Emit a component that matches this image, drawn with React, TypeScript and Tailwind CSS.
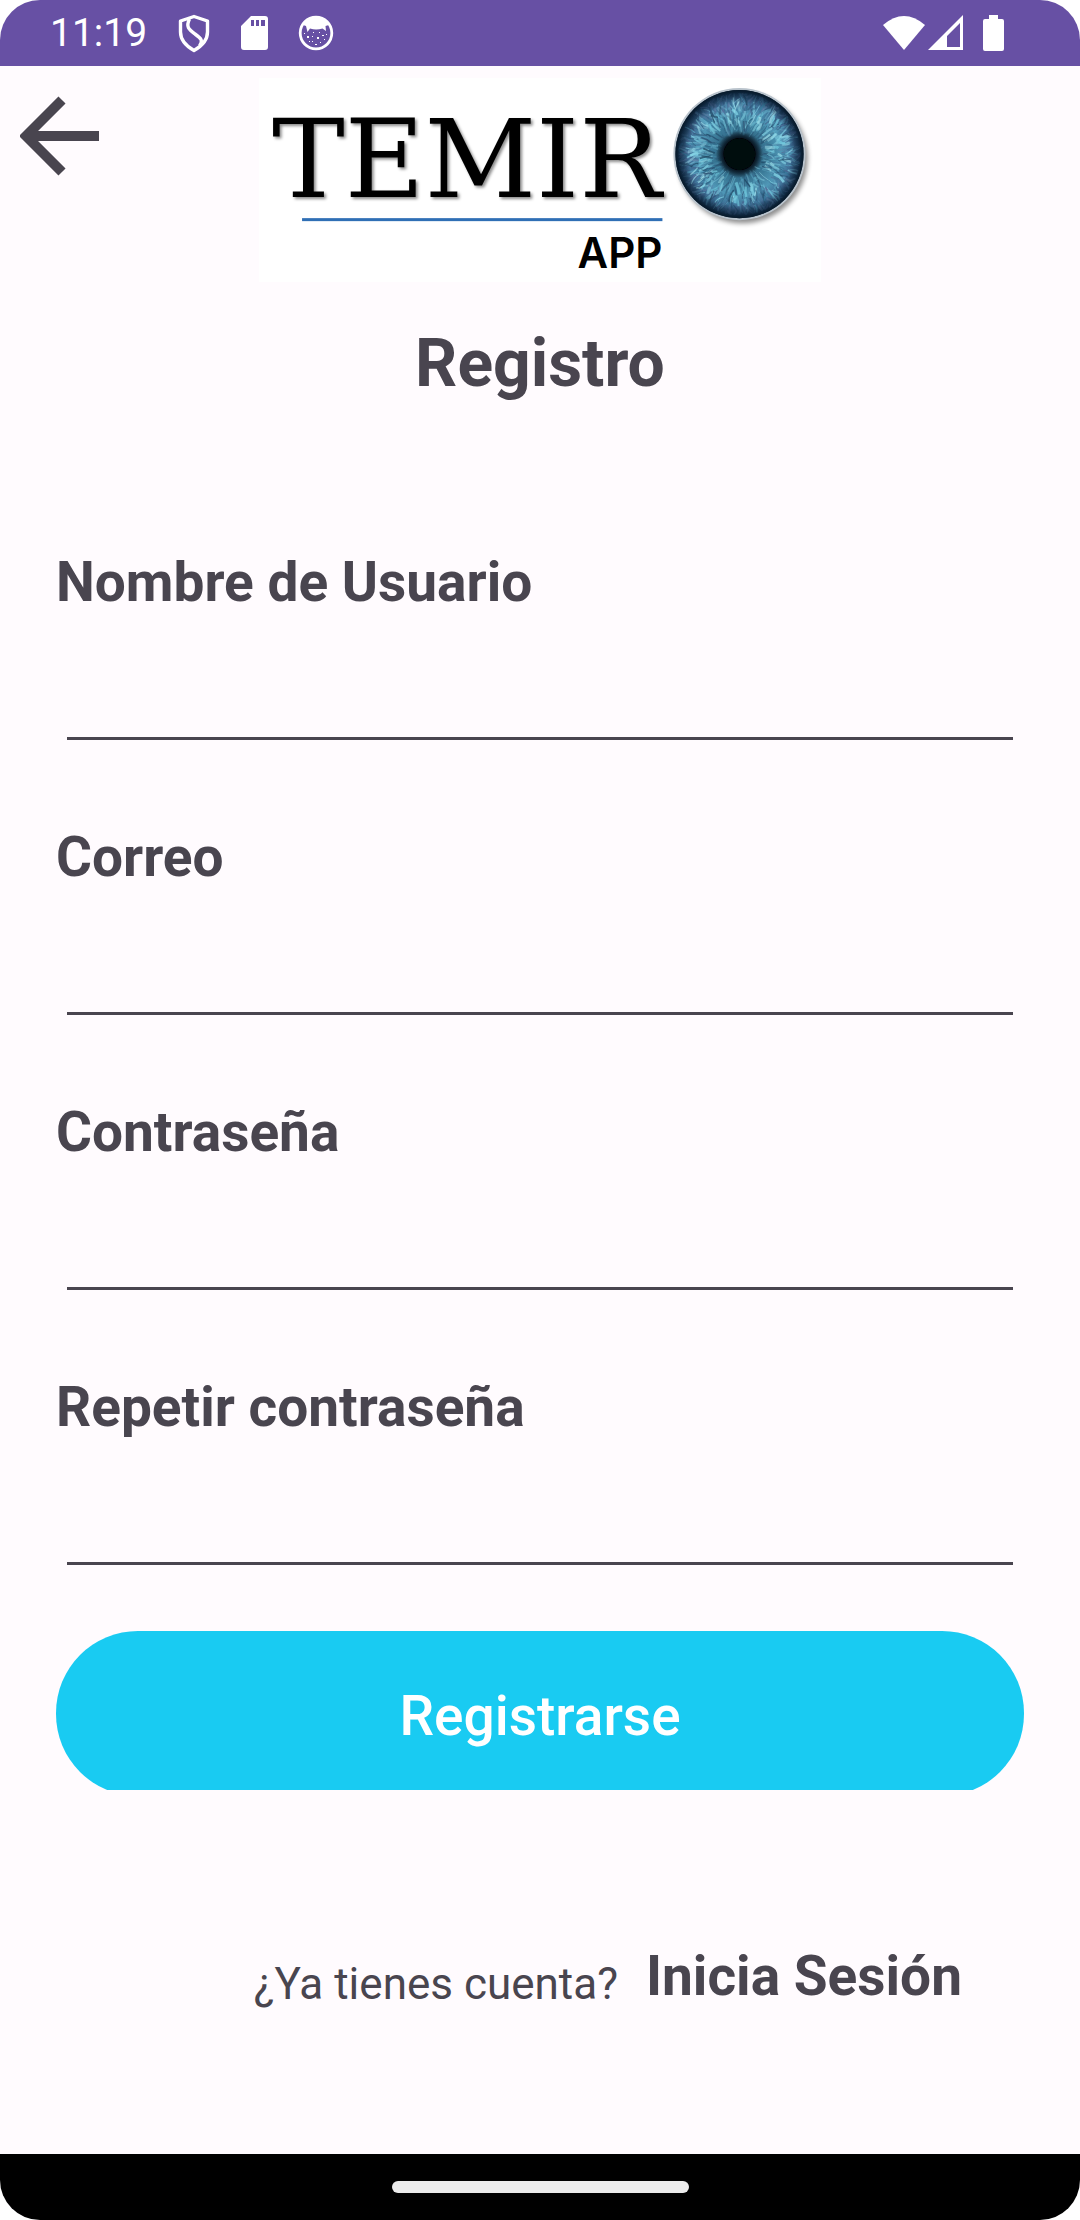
const FIELDS = [
  { id: 'usuario', label: 'Nombre de Usuario', type: 'text' },
  { id: 'correo', label: 'Correo', type: 'email' },
  { id: 'clave', label: 'Contraseña', type: 'password' },
  { id: 'clave2', label: 'Repetir contraseña', type: 'password' },
];

// Deterministic pseudo-random numbers for the iris fibres.
function makeRandom(seed: number) {
  let s = seed;
  return () => {
    s = (s * 16807) % 2147483647;
    return s / 2147483647;
  };
}

function makeFibres(seed: number, count: number, tones: string[], from: number, spread: number, length: number, width: number) {
  const rnd = makeRandom(seed);
  return Array.from({ length: count }, () => {
    const a = rnd() * Math.PI * 2;
    const r1 = from + rnd() * spread;
    const r2 = Math.min(61, r1 + 4 + rnd() * length);
    const b = a + (rnd() - 0.5) * 0.24;
    const m = (a + b) / 2 + (rnd() - 0.5) * 0.12;
    const rm = (r1 + r2) / 2;
    const p = (r: number, t: number) => `${(r * Math.cos(t)).toFixed(1)} ${(r * Math.sin(t)).toFixed(1)}`;
    return {
      d: `M${p(r1, a)}Q${p(rm, m)} ${p(r2, b)}`,
      tone: tones[Math.floor(rnd() * tones.length)],
      w: width * (0.4 + rnd()),
      o: 0.3 + rnd() * 0.5,
    };
  });
}

const FIBRES = [
  ...makeFibres(4217, 260, ['#46618c', '#55709c', '#6486ad', '#35688e'], 38, 20, 10, 1.6),
  ...makeFibres(911, 420, ['#5aa9c6', '#3a7c9e', '#78c2d9', '#2a5576', '#4a7fa4'], 19, 34, 14, 1.4),
  ...makeFibres(77, 150, ['#a3e6f2', '#86d8ea', '#74cfe4'], 26, 20, 9, 2.2),
  ...makeFibres(3053, 80, ['#1d4460', '#2c4f72'], 22, 32, 9, 1.2),
];

function Eye() {
  return (
    <g transform="translate(480 76)">
      <circle cx="3" cy="4" r="65" fill="#000" opacity="0.45" filter="url(#soft)" />
      <circle r="66" fill="#b9c3cc" />
      <circle r="64" fill="url(#iris)" />
      <g fill="none" filter="url(#fine)">
        {FIBRES.map((f, i) => (
          <path key={i} d={f.d} stroke={f.tone} strokeWidth={f.w} opacity={f.o} />
        ))}
      </g>
      <circle r="64" fill="url(#rim)" />
      <circle r="16" fill="#060708" filter="url(#fine)" />
    </g>
  );
}

function Logo() {
  return (
    <svg viewBox="0 0 561 204" className="w-[52%] bg-white" role="img" aria-label="TEMIRO APP">
      <defs>
        <filter id="soft" x="-20%" y="-20%" width="140%" height="140%">
          <feGaussianBlur stdDeviation="2.5" />
        </filter>
        <filter id="fine" x="-20%" y="-20%" width="140%" height="140%">
          <feGaussianBlur stdDeviation="0.6" />
        </filter>
        <filter id="drop" x="-10%" y="-10%" width="120%" height="130%">
          <feDropShadow dx="2" dy="2" stdDeviation="1.5" floodColor="#000" floodOpacity="0.45" />
        </filter>
        <radialGradient id="iris">
          <stop offset="0.25" stopColor="#14293a" />
          <stop offset="0.38" stopColor="#3a7a98" />
          <stop offset="0.65" stopColor="#529bbb" />
          <stop offset="0.85" stopColor="#3a638c" />
          <stop offset="1" stopColor="#0c2338" />
        </radialGradient>
        <radialGradient id="rim">
          <stop offset="0.25" stopColor="#06121c" stopOpacity="0.85" />
          <stop offset="0.36" stopColor="#0a2233" stopOpacity="0.1" />
          <stop offset="0.8" stopColor="#0a2233" stopOpacity="0" />
          <stop offset="0.93" stopColor="#0a2138" stopOpacity="0.6" />
          <stop offset="1" stopColor="#071929" />
        </radialGradient>
      </defs>
      <text x="13" y="119" fontSize="109" fontFamily="'DejaVu Serif', serif" filter="url(#drop)">TEMIR</text>
      <rect x="43" y="140" width="360" height="3" fill="#2f6fb5" />
      <text x="403" y="190" textAnchor="end" fontSize="42" fontWeight="600" fontFamily="Inter, sans-serif">APP</text>
      <Eye />
    </svg>
  );
}

function StatusBar() {
  return (
    <div className="flex h-[66px] items-center justify-between bg-[#6750a4] pr-[76px] pl-[50px] text-white">
      <div className="flex items-center">
        <span className="mr-[30px] text-[39px] leading-[48px]">11:19</span>
        <svg width="34" height="40" viewBox="0 0 34 40" className="mr-[30px]" fill="none" stroke="currentColor" strokeWidth="3.4" strokeLinejoin="round" aria-hidden="true">
          <path d="M17 3.500L30.500 8V19C30.500 27 25 33 17 37.500C9 33 3.500 27 3.500 19V8Z" />
          <path d="M12.500 6C8.500 14 12 16.500 18 21C25 26 26 28 22.500 33" />
        </svg>
        <svg width="27" height="36" viewBox="0 0 27 36" className="mr-[30px]" aria-hidden="true">
          <path fill="currentColor" fillRule="evenodd" d="M10 1H24Q27 1 27 4V32Q27 35 24 35H3Q0 35 0 32V11ZM10 5V11H13V5ZM15 5V11H18V5ZM20 5V11H24V5Z" />
        </svg>
        <svg width="36" height="36" viewBox="0 0 36 36" aria-hidden="true">
          <circle cx="18" cy="18" r="15.800" fill="none" stroke="currentColor" strokeWidth="2.800" />
          <path fill="currentColor" d="M5 10Q10 2 18 2T31 10L27.500 11L28 16L24.500 13.500Q18 15.500 12 13.500L9.500 17L8 11Z" />
          <path fill="currentColor" d="M9 21h2v2h-2zM15 17h1v1h-1zM19 22h2v2h-2zM14 26h1v1h-1zM24 20h2v1h-2zM26 24h1v1h-1zM17 29h2v1h-2zM22 27h1v1h-1zM6 18h1v1h-1zM21 17h1v1h-1zM28 19h1v1h-1zM14 21h1v1h-1zM11 26h1v1h-1z" />
        </svg>
      </div>
      <div className="flex items-center">
        <svg width="42" height="36" viewBox="0 0 42 36" className="mr-[3px]" aria-hidden="true">
          <path fill="currentColor" d="M21 35L0 10Q21 -8 42 10Z" />
        </svg>
        <svg width="35" height="36" viewBox="0 0 35 36" className="mr-5" aria-hidden="true">
          <path fill="currentColor" fillRule="evenodd" d="M35 0V35H0ZM32 8L19 21V32H32Z" />
        </svg>
        <svg width="21" height="36" viewBox="0 0 21 36" aria-hidden="true">
          <path fill="currentColor" d="M6 0H15V4H19Q21 4 21 6V34Q21 36 19 36H2Q0 36 0 34V6Q0 4 2 4H6Z" />
        </svg>
      </div>
    </div>
  );
}

export default function App() {
  return (
    <div className="flex min-h-screen flex-col bg-white font-['Roboto',sans-serif] text-[#49454f]">
      <div className="flex grow flex-col overflow-hidden rounded-[40px] bg-[#fffbfe]">
        <StatusBar />
        <header className="relative flex justify-center pt-3">
          <button type="button" aria-label="Volver" className="absolute top-[30px] left-5">
            <svg width="80" height="80" viewBox="0 0 80 80" fill="none" stroke="currentColor" strokeWidth="10" aria-hidden="true">
              <path d="M42 4L6 40L42 76M6 40H79" />
            </svg>
          </button>
          <Logo />
        </header>
        <main className="flex grow flex-col px-14">
          <h1 className="mt-[43px] text-center text-[66px] leading-[78px] font-bold">Registro</h1>
          <form className="mt-[147px] flex flex-col">
            <div className="flex flex-col gap-[19px]">
              {FIELDS.map((f) => (
                <div key={f.id} className="flex flex-col pb-[66px]">
                  <label htmlFor={f.id} className="text-[55px] leading-16 font-bold">{f.label}</label>
                  <input id={f.id} type={f.type} className="mx-[11px] mt-6 h-[102px] border-b-3 border-[#49454f] bg-transparent text-[44px] outline-none" />
                </div>
              ))}
            </div>
            <div className="h-[159px] overflow-hidden">
              <button type="button" className="h-[165px] w-full rounded-[82px] bg-[#19cbf2] pt-[6px] text-[55px] font-medium text-white">Registrarse</button>
            </div>
          </form>
          <div className="mt-[154px] flex items-start justify-end gap-7 pr-[62px]">
            <span className="mt-[14px] text-[44px] leading-[52px]">¿Ya tienes cuenta?</span>
            <a href="#login" className="text-[55px] leading-16 font-bold">Inicia Sesión</a>
          </div>
        </main>
        <footer className="flex h-[66px] items-center justify-center bg-black">
          <div className="h-3 w-[297px] rounded-full bg-[#ececec]" />
        </footer>
      </div>
    </div>
  );
}
